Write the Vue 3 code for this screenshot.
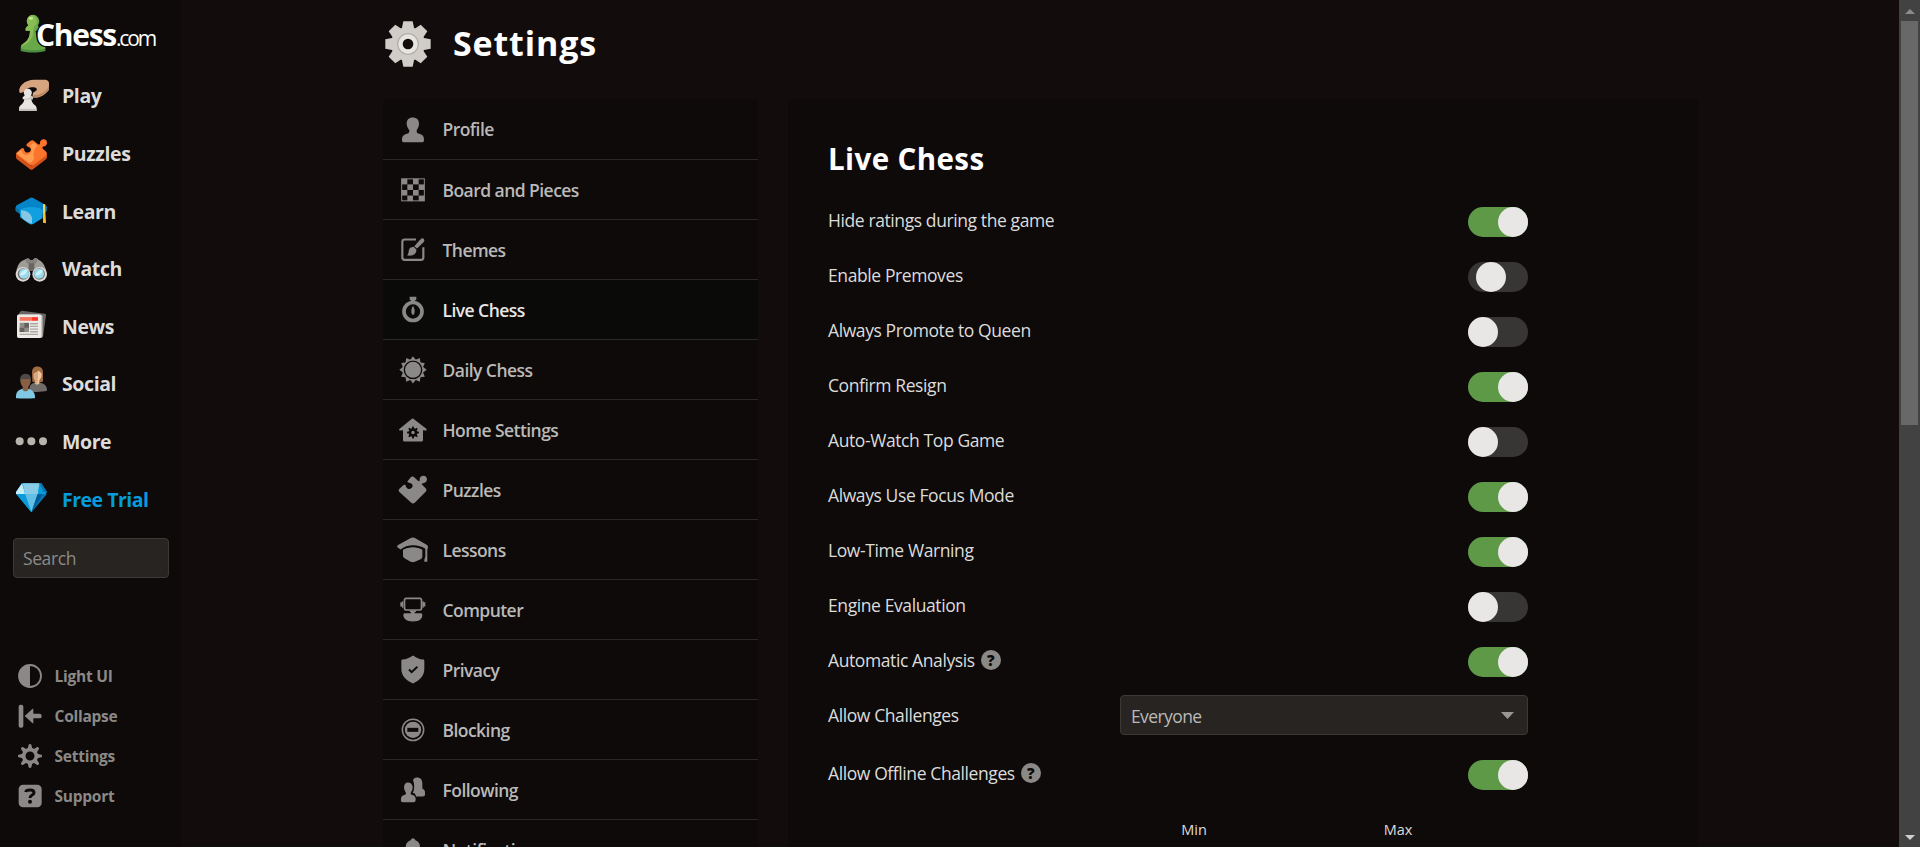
<script setup>
const spin = (count, cx, cy, shape) =>
  Array.from({ length: count }, (_, i) => `<g transform="rotate(${(360 / count) * i} ${cx} ${cy})">${shape}</g>`).join('')

const nav = [
  { label: 'Play', box: '42 235.5 108 108', art: `<path fill="#d6a57f" d="M59 280c-4-8 0-18 8-26 10-9 24-14 40-13h30c6 1 10 5 10 10v20c-8 12-22 22-38 24l-12-1 2-14 11-8c2-5-2-9-9-9-9 0-19 1-24 8-4 6-9 10-18 9z"/><path fill="#b98660" d="M147 268c-8 14-24 24-40 26l-9-1 2-6c20 1 38-10 47-27z"/><path fill="#e7e5e2" d="M83 267a13 13 0 0 1 10 21l6 5v6h-5c1 9 6 15 13 20 3 4 3 8 3 15H57c0-8 0-13 4-16 7-5 11-11 12-19h-5v-6l6-5a13 13 0 0 1 9-21z"/><path fill="#c7c3be" d="M93 288l6 5v6h-5l-19 2v-3l14-2zM58 328h52v6H57z"/>` },
  { label: 'Puzzles', box: '42 408.3 108 108', art: `<path fill="#d6501b" d="M48 463l46 36 47-36v8c0 3-2 6-4 8l-38 29c-3 2-6 2-9 0l-38-29c-3-3-4-5-4-8z"/><path fill="#fa742c" d="M51 457l13-11c4-3 7-2 8 2 1 7 6 11 12 10 7-1 10-7 8-12-2-4-7-5-11-7-3-2-2-5 1-8l8-7c5-4 9-4 13 0l11 9c3 2 6 0 6-4 0-7 5-11 11-11 7 0 10 5 10 11s-5 10-11 11c-3 1-4 4-1 7l8 7c5 5 5 9 0 14l-36 27c-4 3-8 3-12 0l-38-29c-4-3-4-6 0-9z"/><path fill="#ff9c4f" d="M54 458l10-8 4 9c5 8 16 8 22 2 7-8 5-17-1-23l13-10 9 8-2 5c-9 8-10 26-6 34l-8 12-8 2-33-25c-3-2-2-4 0-6z"/>` },
  { label: 'Learn', box: '42 581 108 108', art: `<path fill="#0584c7" d="M47 624l3-6 39-21c4-3 8-3 12 0l37 21 3 6v9l-24 17H68l-21-16z"/><path fill="#0d70a5" d="M47 624l21 17v10l-21-17zM118 640l23-16v10l-21 17z"/><path fill="#119fdf" d="M60 631c18-11 50-11 68 0v25l-28 18c-4 2-8 2-12 0l-24-17c-3-2-4-4-4-8z"/><path fill="#86c7e5" d="M63 633c16 0 30 9 33 23v17c-10 0-32-16-32-22z"/><path fill="#f6be27" d="M129 614h6l3 58-9-2z"/><path fill="#fadb70" d="M131 616h3v26h-3z"/>` },
  { label: 'Watch', box: '42 33.9 108 108', art: `<path fill="#a09c98" d="M74 60c6-6 14-4 17 1h7c4-6 12-7 17-1 13 5 21 20 24 35l-30 8-9-10H88l-10 10-29-8c3-17 10-31 25-35z"/><path fill="#686562" d="M86 62h17v31H86z"/><path fill="#85817d" d="M88 61h13v10H88zM76 60l10-4 4 6-8 11zM113 60l-10-4-4 6 8 11z"/><circle cx="69" cy="104" r="22" fill="#dcd9d5"/><circle cx="119" cy="104" r="22" fill="#dcd9d5"/><circle cx="70" cy="103" r="17" fill="#777370"/><circle cx="118" cy="103" r="17" fill="#777370"/><circle cx="72" cy="102" r="15" fill="#9ad9ed"/><circle cx="117" cy="102" r="15" fill="#9ad9ed"/><path fill="#caf3fa" d="M60 107c2-10 12-18 22-17-2 12-11 19-22 17zM106 107c2-10 12-18 22-17-2 12-11 19-22 17z"/>` },
  { label: 'News', box: '42 206.7 108 108', art: `<path fill="#686562" d="M66 215l68 9c3 0 4 2 4 5l-9 64-4 4-70-68 5-11z"/><rect x="51" y="226" width="77" height="71" rx="7" fill="#b9b5b0"/><rect x="51" y="226" width="73" height="71" rx="7" fill="#eceae7"/><path fill="#fa735d" d="M59 234h37v11H59z"/><path fill="#fc3826" d="M96 234h18v11H96z"/><path fill="#908d89" d="M59 251h28v28H59z"/><path fill="#64615f" d="M73 252h14v14H73zM59 266h14v13H59z"/><path fill="#aaa7a2" d="M90 252h24v4H90zM90 260h24v4H90zM90 268h24v4H90zM90 276h24v4H90zM59 284h55v4H59z"/>` },
  { label: 'Social', box: '42 379.5 108 108', art: `<path fill="#a36c42" d="M96 398c0-11 7-17 16-17 11 0 17 7 17 18v27c-9 4-25 4-32 0z"/><path fill="#6f6c6a" d="M88 456c-1-18 3-22 17-27h13c16 4 23 9 23 25-13 4-39 4-53 2z"/><path fill="#efc9a5" d="M102 401c6-1 10-4 13-8 5 4 9 6 10 12 0 9-4 14-7 17v9c-2 5-11 5-13 0v-9c-4-6-5-14-3-21z"/><path fill="#dba77d" d="M102 402c6-1 10-4 13-8-2 16-1 29-3 40l-7-3v-9c-4-6-5-13-3-20z"/><path fill="#80c8e4" d="M48 476c-1-17 5-24 20-28h16c16 4 21 12 21 28-15 1-43 1-57 0z"/><path fill="#885f42" d="M61 417h32c0 13-3 19-8 25v9c-4 6-13 6-17 0v-9c-5-6-8-14-7-25z"/><path fill="#4d4a48" d="M60 426c-1-14 5-23 17-23s18 9 16 23c-2-7-6-9-16-8-9 0-15 1-17 8z"/>` },
  { label: 'More', box: '42 552.3 108 108', art: `<g fill="#b7b3ad"><circle cx="59" cy="604" r="12"/><circle cx="94" cy="604" r="12"/><circle cx="129" cy="604" r="12"/></g>` },
  { label: 'Free Trial', box: '42 65 108 108', accent: true, art: `<path fill="#0ba4df" d="M66 72h58l17 26-47 61-46-61z"/><path fill="#c5eefb" d="M66 72l9 32H48v-6z"/><path fill="#8acce7" d="M68 72h50l-4 32H75z"/><path fill="#62bfe5" d="M75 104h38l-19 55z"/><path fill="#0874b2" d="M113 104h28l-47 55zM118 72h6l17 27h-13z"/><path fill="#0a9cd8" d="M48 104h27l19 55zM114 104l4-31 16 31z"/><path fill="#055a98" d="M113 105h15L95 158z"/>` },
]

const utilities = [
  { label: 'Light UI', box: '54 72 72 72', art: `<circle cx="90" cy="108" r="33" fill="none" stroke="currentColor" stroke-width="5.5"/><path d="M90 75a33 33 0 0 0 0 66z"/>` },
  { label: 'Collapse', box: '54 192 72 72', art: `<rect x="56" y="194" width="14" height="69" rx="6"/><path d="M74 228l23-21c2-1 3 0 3 2v12h19c4 0 6 3 6 7s-2 7-6 7h-19v13c0 2-1 2-3 1z"/>` },
  { label: 'Settings', box: '54 312 72 72', art: `<circle cx="90" cy="348" r="19" fill="none" stroke="currentColor" stroke-width="11"/>` + spin(8, 90, 348, '<path d="M83 327l3-13c1-3 7-3 8 0l3 13z"/>') },
  { label: 'Support', box: '54 432 72 72', art: `<rect x="56" y="434" width="69" height="68" rx="13"/><path d="M77 456c2-8 25-9 25 2 0 8-12 6-12 16" fill="none" stroke="#0d0a09" stroke-width="9"/><circle cx="90" cy="485" r="6" fill="#0d0a09"/>` },
]

const squares = []
for (let r = 0; r < 4; r++) for (let c = 0; c < 4; c++) if ((r + c) % 2 === 0) squares.push(`<rect x="${95 + c * 17}" y="${535 + r * 16.7}" width="17" height="16.7"/>`)

const cog = `<circle cx="114" cy="132" r="51"/>` + spin(8, 114, 132, '<path d="M95 88l5-24h28l5 24z"/>')

const menu = [
  { label: 'Profile', box: '84 343.5 90 90', art: `<path d="M128 351c12 0 19 7 19 18 0 9-3 14-7 20-1 6 2 10 8 11 11 3 14 8 14 19 0 5-3 6-8 6h-50c-5 0-8-1-8-6 0-11 4-16 14-19 6-1 9-5 8-11-4-6-8-11-8-20 0-11 7-18 18-18z"/>` },
  { label: 'Board and Pieces', box: '84 523.5 90 90', art: `<rect x="95" y="535" width="68" height="66" fill="none" stroke="currentColor" stroke-width="3"/>` + squares.join('') },
  { label: 'Themes', box: '84 43.5 90 90', art: `<path d="M138 57h-34c-5 0-7 2-7 7v47c0 5 2 7 7 7h49c5 0 7-2 7-7V80" fill="none" stroke="currentColor" stroke-width="6.5"/><path d="M160 54c5 5 3 9-1 13l-18 17-8-7 17-19c4-4 7-6 10-4zM131 79l8 8c1 14-9 20-28 18 7-4 3-20 11-24z"/>` },
  { label: 'Live Chess', box: '84 223.5 90 90', active: true, art: `<circle cx="129" cy="273" r="27" fill="none" stroke="currentColor" stroke-width="11"/><path d="M119 229h20v9l-4 2v4h-12v-4l-4-2zM129 256c5 10 6 15 4 22-1 6-7 6-8 0-2-7-1-12 4-22z"/>` },
  { label: 'Daily Chess', box: '84 403.5 90 90', art: `<circle cx="129" cy="448" r="30" fill="none" stroke="currentColor" stroke-width="3.5"/><circle cx="129" cy="448" r="24"/>` + spin(12, 129, 448, '<path d="M120 419l9-12 9 12z"/>') },
  { label: 'Home Settings', box: '84 583.5 90 90', art: `<path d="M129 594l40 31c3 3 1 6-3 5l-7-1v29c0 3-1 5-4 5h-52c-3 0-4-2-4-5v-29l-7 1c-5 1-7-2-3-5l34-28c2-2 4-3 6-3z"/><g fill="#0d0a09"><circle cx="129" cy="636" r="13"/>${spin(8, 129, 636, '<path d="M125 626l2-8h4l2 8z"/>')}</g><circle cx="129" cy="636" r="5"/>` },
  { label: 'Puzzles', box: '84 43.5 90 90', art: `<path d="M89 84l11-10c4-3 7-1 8 4 1 6 7 9 13 7 7-3 9-10 4-15-3-3-8-3-11-5-3-1-2-3 1-6l6-7c5-5 9-5 13 0l10 9c3 3 5 1 5-4 0-7 5-11 11-11 7 0 11 5 11 11s-5 10-12 11c-4 0-5 3-1 6l9 9c3 4 3 7 0 11l-32 32c-4 4-8 4-12 0L89 95c-4-4-4-7 0-11z"/>` },
  { label: 'Lessons', box: '84 223.5 90 90', art: `<path d="M129 231c2 0 5 1 7 2l34 20c4 3 4 6 4 9l-2 5v37h-9v-6l3-10v-23c-19-15-56-15-74 2l-9-6c-2-2-2-4 0-7l38-21c3-1 5-2 8-2z"/><path d="M99 268c14-10 45-11 58 0v20c0 4-3 7-7 9l-15 7c-5 2-8 2-13 0l-16-9c-5-3-7-5-7-9z"/><path d="M95 268c16-14 51-14 66 0" fill="none" stroke="#0d0a09" stroke-width="3"/>` },
  { label: 'Computer', box: '84 403.5 90 90', art: `<rect x="103.5" y="413.5" width="51" height="35" rx="5" fill="none" stroke="currentColor" stroke-width="5"/><path d="M100 422v20h-4v-4h-5v-13h5v-3zM157 422v20h4v-4h5v-13h-5v-3zM119 450h19v4l-4 1v3h20c6 3 2 14-2 18-8 9-38 9-46 0-5-5-9-15-3-18h20v-3l-4-1z"/>` },
  { label: 'Privacy', box: '84 583.5 90 90', art: `<path d="M129 585c10 7 19 12 31 12 2 0 3 2 3 5v23c0 23-15 35-34 44-20-9-35-21-35-44v-23c0-3 1-5 3-5 12 0 22-5 32-12z"/><path d="M117 627l8 8 17-16" fill="none" stroke="#0d0a09" stroke-width="6"/>` },
  { label: 'Blocking', box: '84 73.5 90 90', art: `<circle cx="129" cy="118" r="32" fill="none" stroke="currentColor" stroke-width="4.5"/><circle cx="129" cy="118" r="24.5"/><path d="M112 112h33v12h-33z" fill="#0d0a09"/>` },
  { label: 'Following', box: '84 253.5 90 90', art: `<path d="M129 270c1-5 6-9 12-9 10 0 16 6 16 18v14c1 3 8 3 8 12v9c-2 4-9 4-19 4h-8c-1-7-4-10-10-11 6-8 6-28 1-37z"/><path d="M114 276c9 0 14 6 14 16 0 8-6 13-6 17 0 6 15 3 15 16 0 7 0 10-7 10h-31c-6 0-7-3-6-10 0-13 15-10 15-16 0-4-6-9-6-17 0-10 4-16 12-16z"/>` },
  { label: 'Notifications', box: '84 433.5 90 90', art: `<path d="M129 444c4 0 6 2 7 5 10 3 14 10 14 22 0 16 10 18 10 27h-63c0-9 10-11 10-27 0-12 5-19 15-22 1-3 3-5 7-5z"/>` },
]

const options = [
  { label: 'Hide ratings during the game', state: 'on' },
  { label: 'Enable Premoves', state: 'moving' },
  { label: 'Always Promote to Queen', state: 'off' },
  { label: 'Confirm Resign', state: 'on' },
  { label: 'Auto-Watch Top Game', state: 'off' },
  { label: 'Always Use Focus Mode', state: 'on' },
  { label: 'Low-Time Warning', state: 'on' },
  { label: 'Engine Evaluation', state: 'off' },
  { label: 'Automatic Analysis', state: 'on', help: true },
  { label: 'Allow Challenges', select: 'Everyone' },
  { label: 'Allow Offline Challenges', state: 'on', help: true },
]
</script>

<template>
  <div class="page">
    <aside class="sidebar">
      <a class="logo">
        <svg class="pawn" viewBox="58 40 80 118">
          <path fill="#4c8c40" d="M60 144h75v7c-12 7-63 7-75 0z" />
          <path fill="#69a849" d="M97 42a20 20 0 0 1 15 32l3 6v11h-10c2 20 8 33 24 42 5 4 6 7 6 11-12 8-63 8-75 0 0-5 1-9 6-12 15-9 22-21 22-41H75V82l8-8a20 20 0 0 1 14-32z" />
          <path fill="#87bd54" d="M93 43a19 19 0 0 1 7 35l-2 14c0 17-7 31-24 40-6 4-9 6-13 5 1-2 2-4 5-6 15-9 22-21 22-40H75V82l8-8a19 19 0 0 1 10-31z" />
          <ellipse cx="91" cy="53" rx="7" ry="5" fill="#c3e58d" />
        </svg>
        <span class="brand">Chess</span><span class="tld">.com</span>
      </a>
      <nav class="nav">
        <a v-for="item in nav" :key="item.label" :class="{ accent: item.accent }">
          <svg :viewBox="item.box" v-html="item.art" />
          <span>{{ item.label }}</span>
        </a>
      </nav>
      <div class="search">Search</div>
      <div class="utilities">
        <a v-for="item in utilities" :key="item.label">
          <svg :viewBox="item.box" v-html="item.art" />
          <span>{{ item.label }}</span>
        </a>
      </div>
    </aside>

    <main class="main">
      <header class="title">
        <svg viewBox="45 63 138 138">
          <g fill="#d0ccc8" v-html="cog" />
          <circle cx="114" cy="132" r="31" fill="#e7e5e2" stroke="#b5b0ac" stroke-width="4" />
          <circle cx="114" cy="132" r="16" fill="#120c0c" />
        </svg>
        <h1>Settings</h1>
      </header>
      <div class="columns">
        <nav class="menu">
          <a v-for="item in menu" :key="item.label" :class="{ active: item.active }">
            <svg :viewBox="item.box" v-html="item.art" />
            <span>{{ item.label }}</span>
          </a>
        </nav>
        <section class="panel">
          <h2>Live Chess</h2>
          <div v-for="opt in options" :key="opt.label" class="option" :class="{ tall: opt.select }">
            <span class="label">{{ opt.label }}</span>
            <span v-if="opt.help" class="help">?</span>
            <div v-if="opt.select" class="select">
              <span>{{ opt.select }}</span>
              <svg viewBox="0 0 13 7"><path d="M0 0h13L6.5 7z" /></svg>
            </div>
            <div v-else class="toggle" :class="opt.state"><i /></div>
          </div>
          <div class="range"><span>Min</span><span>Max</span></div>
        </section>
      </div>
    </main>

    <div class="scrollbar">
      <svg viewBox="0 0 10 5"><path d="M5 0l5 5H0z" fill="#8b8b8b" /></svg>
      <div class="thumb" />
      <svg viewBox="0 0 10 5"><path d="M0 0h10L5 5z" fill="#d0d0d0" /></svg>
    </div>
  </div>
</template>

<style>
html, body { margin: 0; overflow: hidden; background: #120c0c; }
</style>

<style scoped>
.page {
  display: flex;
  height: 847px;
  overflow: hidden;
  background: #120c0c;
  color: #dddcdb;
  font-family: "Open Sans", "Noto Sans", sans-serif;
}
svg { display: block; flex: none; fill: currentColor; overflow: visible; }
h1, h2 { margin: 0; color: #fff; font-weight: 700; }

.sidebar {
  display: flex;
  flex-direction: column;
  width: 181px;
  flex: none;
  background: #0d0a09;
}
.logo {
  display: flex;
  align-items: baseline;
  height: 54px;
  padding: 13.5px 0 0 19.5px;
  box-sizing: border-box;
  color: #fff;
}
.pawn { width: 26.5px; height: 39px; align-self: flex-start; }
.brand {
  position: relative;
  margin-left: -10px;
  font: 700 30px/42px "Open Sans", sans-serif;
  letter-spacing: -1.3px;
  text-shadow: -1.5px 0 0 #0d0a09, -1px 1px 0 #0d0a09;
}
.tld { font-size: 21px; line-height: 42px; letter-spacing: -2.1px; }
.nav { margin-top: 13.2px; }
.nav a {
  display: flex;
  align-items: center;
  gap: 12px;
  height: 57.6px;
  padding-left: 14px;
  font-size: 19.5px;
  font-weight: 700;
  letter-spacing: -0.4px;
  white-space: nowrap;
}
.nav svg { width: 36px; height: 36px; }
.nav .accent { color: #069cdb; letter-spacing: -0.5px; }
.search {
  height: 40px;
  margin: 10px 12px 0 13px;
  padding-left: 9px;
  box-sizing: border-box;
  border: 1px solid #3b3836;
  border-radius: 4px;
  background: #272422;
  color: #8c8a88;
  font-size: 17.5px;
  line-height: 39px;
  letter-spacing: -0.4px;
}
.utilities { margin-top: 78px; color: #8b8987; }
.utilities a {
  display: flex;
  align-items: center;
  gap: 12.5px;
  height: 40px;
  padding-left: 18px;
  font-size: 15.5px;
  font-weight: 700;
  letter-spacing: -0.25px;
}
.utilities svg { width: 24px; height: 24px; }
.utilities span { padding-top: 1px; }

.main { flex: 1; padding-left: 202px; }
.title { display: flex; align-items: center; gap: 22px; height: 88px; padding-left: 2px; }
.title svg { width: 46px; height: 46px; }
.title h1 { padding-bottom: 2px; font-size: 34px; line-height: 46px; letter-spacing: 0.85px; }
.columns { display: flex; align-items: flex-start; gap: 30px; margin-top: 11px; }
.menu {
  width: 375px;
  padding-top: 1px;
  border-radius: 5px 5px 0 0;
  background: #0d0a09;
  overflow: hidden;
}
.menu a {
  display: flex;
  align-items: center;
  gap: 14.5px;
  height: 59px;
  padding-left: 15px;
  border-bottom: 1px solid #2a2726;
  color: #bab9b8;
  font-size: 17.5px;
  font-weight: 600;
  letter-spacing: -0.55px;
}
.menu svg { width: 30px; height: 30px; color: #8b8987; }
.menu span { padding-top: 1px; }
.menu a:first-child span { padding: 0 0 1px; }
.menu .active { background: #0a0a08; color: #e8e7e6; }

.panel {
  width: 910px;
  height: 900px;
  box-sizing: border-box;
  padding: 40px 170px 0 40px;
  border-radius: 5px 5px 0 0;
  background: #0d0a09;
}
.panel h2 { height: 40px; margin-bottom: 15px; font-size: 29.5px; line-height: 40px; letter-spacing: 0.4px; }
.option { display: flex; align-items: flex-start; height: 55px; }
.option.tall { height: 58px; }
.label { font-size: 17.5px; line-height: 53px; letter-spacing: -0.4px; white-space: nowrap; }
.help {
  width: 20px;
  height: 20px;
  margin: 15.5px 0 0 6px;
  border-radius: 50%;
  background: #8b8987;
  color: #0d0a09;
  font-size: 15px;
  font-weight: 800;
  line-height: 20px;
  text-align: center;
}
.toggle {
  display: flex;
  width: 60px;
  height: 30px;
  margin: 13px 0 0 auto;
  border-radius: 15px;
  background: #383535;
}
.toggle i { width: 30px; height: 30px; border-radius: 50%; background: #e8e7e5; }
.toggle.on { justify-content: flex-end; background: #5e9948; }
.toggle.moving i { margin-left: 8px; }
.select {
  display: flex;
  align-items: center;
  justify-content: space-between;
  width: 408px;
  height: 40px;
  margin: 6px 0 0 auto;
  padding: 0 13px 0 10px;
  box-sizing: border-box;
  border: 1px solid #3b3836;
  border-radius: 4px;
  background: #272422;
  color: #bab9b8;
  font-size: 17.5px;
  letter-spacing: -0.6px;
}
.select span { padding-top: 2px; }
.select svg { width: 13px; height: 7px; color: #999795; }
.range {
  display: grid;
  grid-template-columns: 204px 204px;
  justify-content: end;
  padding-top: 18px;
  font-size: 14.5px;
  line-height: 20px;
  text-align: center;
}
.range span { padding-right: 56px; }

.scrollbar {
  display: flex;
  flex-direction: column;
  align-items: center;
  width: 21px;
  flex: none;
  background: #424242;
}
.scrollbar svg { width: 10px; height: 5px; margin: 9px 0 7px; }
.thumb { width: 17px; height: 404px; margin-bottom: auto; background: #686868; }
</style>
